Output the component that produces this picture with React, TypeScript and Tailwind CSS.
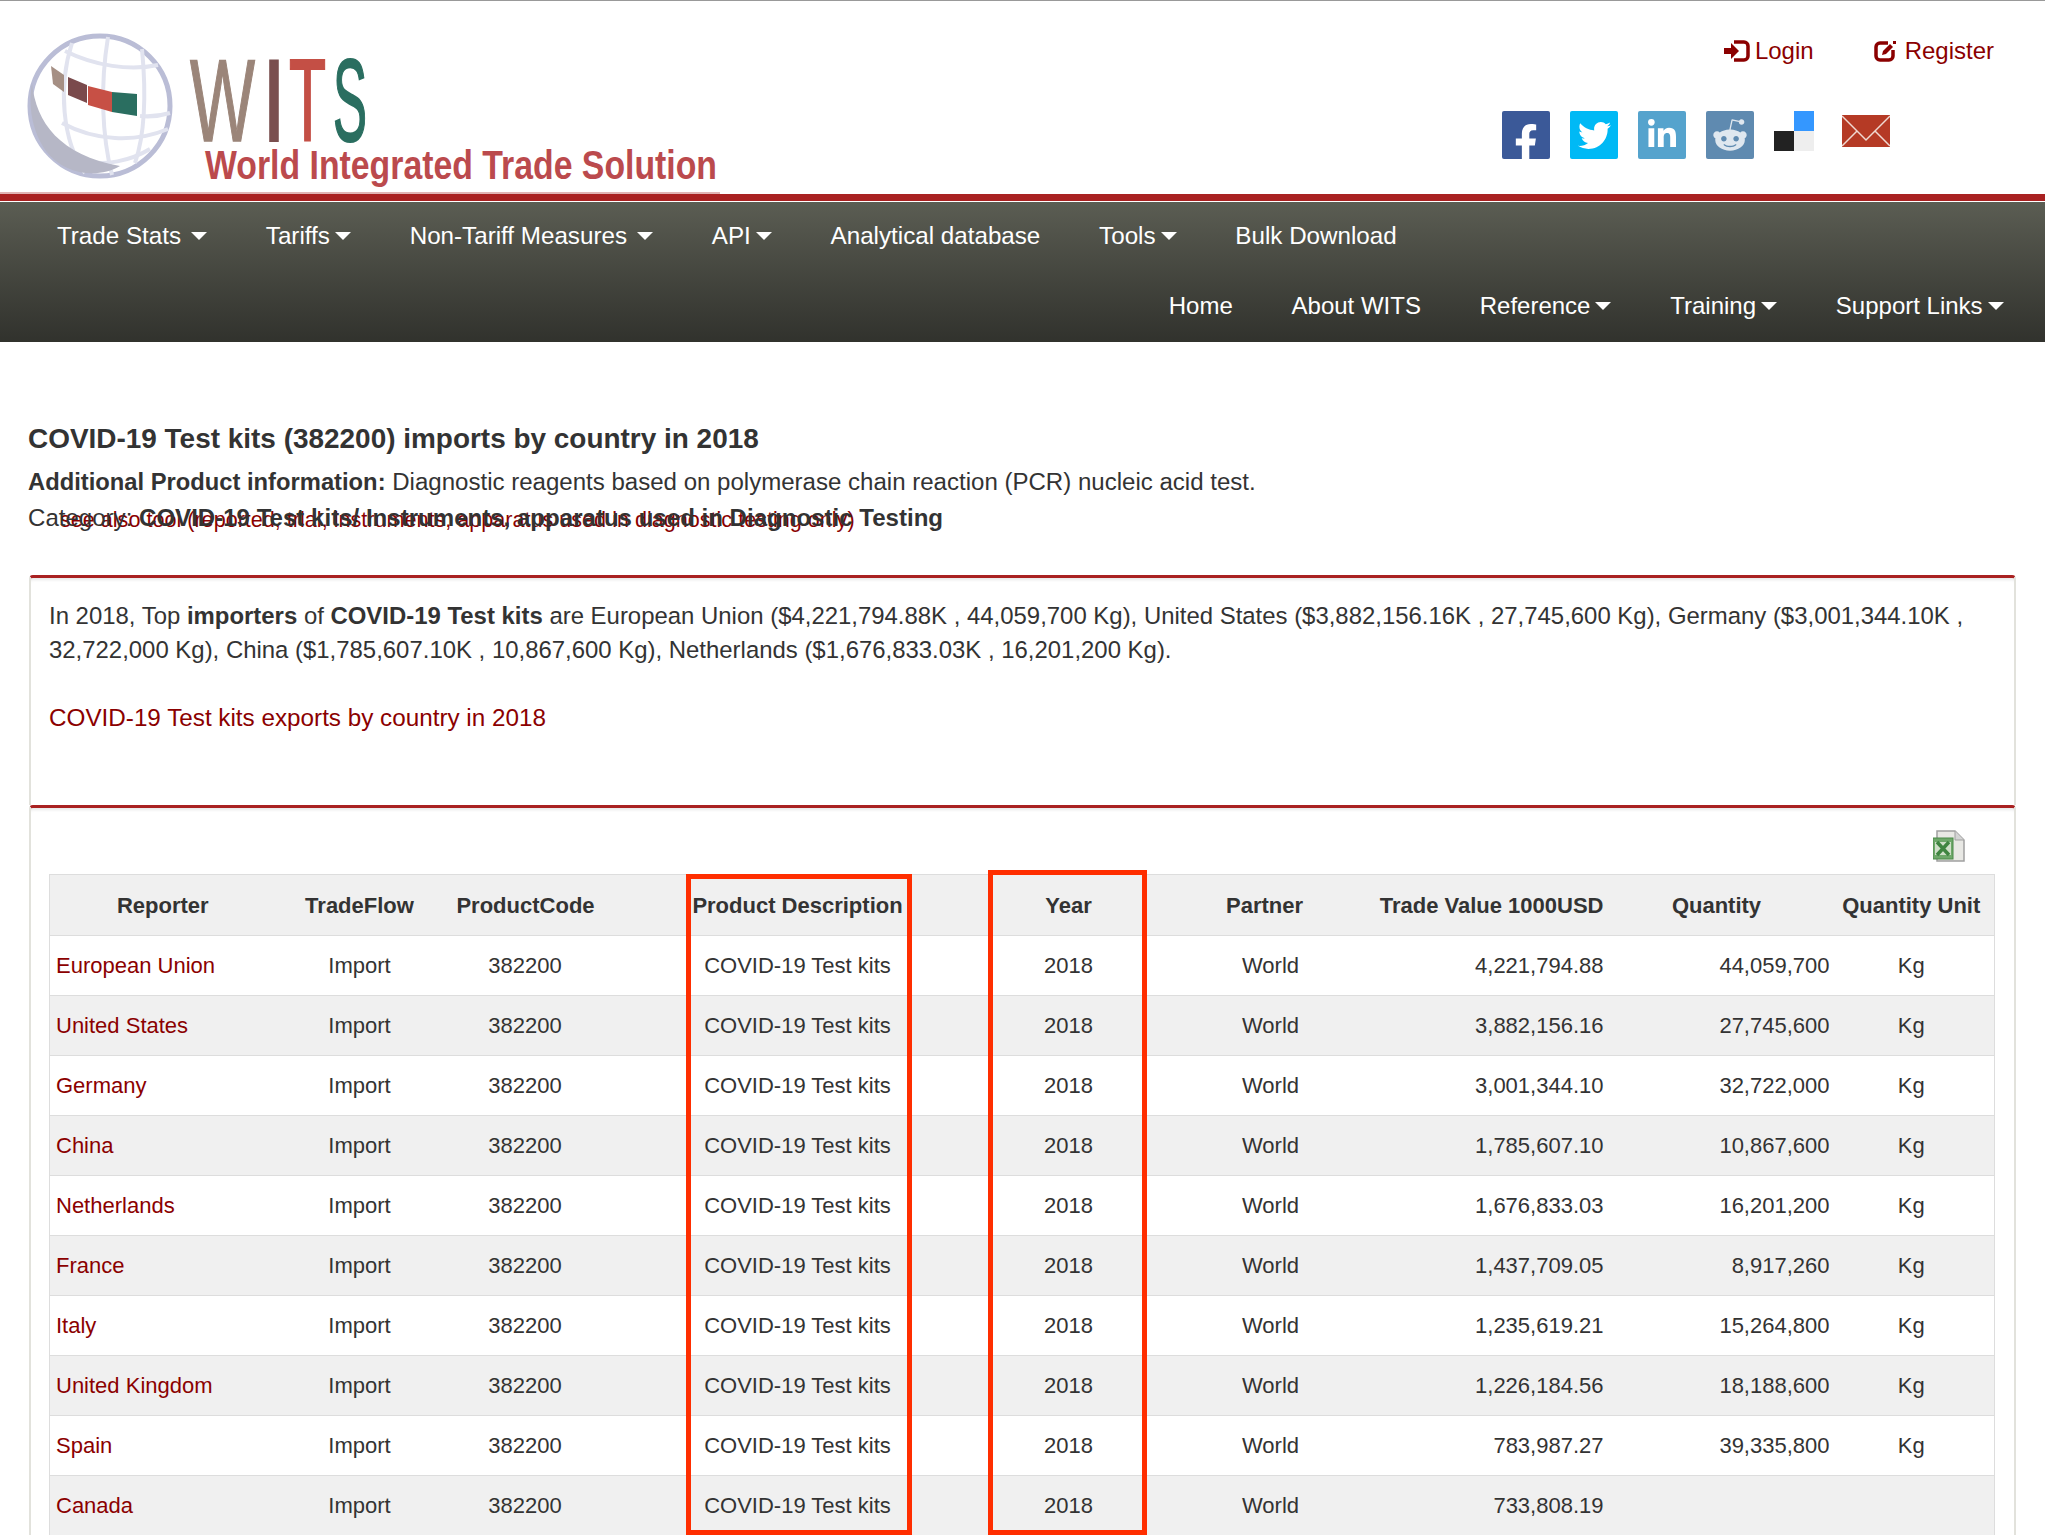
import { FaFacebookF, FaLinkedinIn, FaRedditAlien, FaTwitter } from "react-icons/fa";

const rows = [
  ["European Union", "4,221,794.88", "44,059,700", "Kg"],
  ["United States", "3,882,156.16", "27,745,600", "Kg"],
  ["Germany", "3,001,344.10", "32,722,000", "Kg"],
  ["China", "1,785,607.10", "10,867,600", "Kg"],
  ["Netherlands", "1,676,833.03", "16,201,200", "Kg"],
  ["France", "1,437,709.05", "8,917,260", "Kg"],
  ["Italy", "1,235,619.21", "15,264,800", "Kg"],
  ["United Kingdom", "1,226,184.56", "18,188,600", "Kg"],
  ["Spain", "783,987.27", "39,335,800", "Kg"],
  ["Canada", "733,808.19", "", ""],
];

const Caret = ({ wide }: { wide?: boolean }) => (
  <span
    className={`inline-block border-x-[8px] border-t-[8px] border-x-transparent border-t-white align-middle ${wide ? "ml-[10px]" : "ml-[5px]"}`}
  />
);

const NavItem = ({ label, caret, wide }: { label: string; caret?: boolean; wide?: boolean }) => (
  <a className="flex h-[70px] items-center px-[29.4px] pb-[2px] whitespace-nowrap text-white">
    {label}
    {caret && <Caret wide={wide} />}
  </a>
);

function Logo() {
  return (
    <svg width="730" height="193" viewBox="0 0 730 193" className="block shrink-0">
      <rect x="0" y="191" width="720" height="2" fill="#e0b4b4" />
      <circle cx="100" cy="105" r="70" fill="#fff" stroke="#babdd6" strokeWidth="5" />
      <g fill="none" stroke="#e1e3ef" strokeWidth="4">
        <path d="M72 42 C58 85 62 140 85 172" />
        <path d="M108 36 C100 85 102 135 112 174" />
        <path d="M142 48 C146 90 146 130 135 162" />
        <path d="M65 50 C95 65 130 70 158 64" />
        <path d="M140 115 C150 116 160 115 170 112" />
        <path d="M62 122 C95 140 135 142 168 128" />
        <path d="M85 160 C105 165 130 160 150 148" />
      </g>
      <path d="M32 82 C36 122 60 154 120 165 C98 178 64 174 46 150 C32 130 28 105 32 82 Z" fill="#b6b7c6" />
      <polygon points="51,65 64,74 64,91 53,83" fill="#a58f84" />
      <polygon points="68,76 87,84 87,102 68,94" fill="#7a4a4c" />
      <polygon points="88,85 112,91 112,111 88,104" fill="#c75045" />
      <polygon points="112,91 137,93 137,115 112,111" fill="#2a6e60" />
      <g fontFamily="'Liberation Sans', sans-serif">
        <text x="190" y="140" fontSize="116" fill="#9b8579" stroke="#9b8579" strokeWidth="1.5" textLength="65" lengthAdjust="spacingAndGlyphs">W</text>
        <text x="262" y="140" fontSize="116" fill="#7a4f4f" stroke="#7a4f4f" strokeWidth="2" textLength="24" lengthAdjust="spacingAndGlyphs">I</text>
        <text x="289" y="140" fontSize="116" fill="#c44f45" stroke="#c44f45" strokeWidth="2" textLength="37" lengthAdjust="spacingAndGlyphs">T</text>
        <text x="333" y="140" fontSize="116" fill="#2a6e60" stroke="#2a6e60" strokeWidth="2" textLength="34" lengthAdjust="spacingAndGlyphs">S</text>
        <text x="205" y="178" fontSize="41" fontWeight="700" fill="#bb4a4d" textLength="512" lengthAdjust="spacingAndGlyphs">
          World Integrated Trade Solution
        </text>
      </g>
    </svg>
  );
}

const LoginIcon = () => (
  <svg width="26" height="22" viewBox="0 0 26 22" className="shrink-0">
    <path d="M0 8h7V3l8 8-8 8v-5H0z" fill="#8b0000" />
    <path d="M10 2h10a4 4 0 0 1 4 4v10a4 4 0 0 1-4 4H10" fill="none" stroke="#8b0000" strokeWidth="3.5" />
  </svg>
);

const RegisterIcon = () => (
  <svg width="23" height="22" viewBox="0 0 23 22" className="shrink-0">
    <path d="M14 3H6a4 4 0 0 0-4 4v9a4 4 0 0 0 4 4h9a4 4 0 0 0 4-4v-6" fill="none" stroke="#8b0000" strokeWidth="3.5" />
    <path d="M8 15l1-4 7-7 3 3-7 7z" fill="#8b0000" />
    <rect x="19" y="1" width="3" height="3" fill="#8b0000" />
  </svg>
);

function Socials() {
  return (
    <div className="flex items-start gap-5">
      <span className="relative h-12 w-12 overflow-hidden rounded-[2px] bg-[#3b5998] text-white">
        <FaFacebookF className="absolute -bottom-[3px] right-[5px]" size={38} />
      </span>
      <span className="flex h-12 w-12 items-center justify-center rounded-[2px] bg-[#00b9f5] text-white">
        <FaTwitter size={33} />
      </span>
      <span className="flex h-12 w-12 items-center justify-center rounded-[2px] bg-[#55a3cd] text-white">
        <FaLinkedinIn size={32} />
      </span>
      <span className="flex h-12 w-12 items-center justify-center rounded-[2px] bg-[#5f8ab0] text-[#dfe7ef]">
        <FaRedditAlien size={36} />
      </span>
      <svg width="40" height="40" viewBox="0 0 40 40" className="block">
        <rect x="20" y="0" width="20" height="20" fill="#3497ff" />
        <rect x="0" y="20" width="20" height="20" fill="#222" />
        <rect x="20" y="20" width="20" height="20" fill="#eeeeee" />
      </svg>
      <svg width="48" height="32" viewBox="0 0 48 32" className="mt-1 ml-2 block">
        <rect width="48" height="32" fill="#b53a25" />
        <path d="M0 1l24 24L48 1M0 31l15-15M48 31L33 16" fill="none" stroke="#f0d9d2" strokeWidth="1.5" />
      </svg>
    </div>
  );
}

const ExcelIcon = () => (
  <svg width="32" height="32" viewBox="0 0 32 32" className="block">
    <path d="M4 1h18l9 9v21H4z" fill="#e8e8e4" stroke="#a0a0a0" strokeWidth="1.5" />
    <path d="M22 1v9h9" fill="#d4d4d4" stroke="#a0a0a0" />
    <rect x="0" y="8" width="20" height="21" fill="#6ea86a" stroke="#4a8a48" />
    <rect x="2" y="12" width="16" height="13" fill="#cfdfc8" />
    <path d="M4 12l12 13M16 12L4 25" stroke="#3f8540" strokeWidth="3.5" />
  </svg>
);

export default function App() {
  return (
    <div className="relative h-[1535px] overflow-hidden bg-white font-['Liberation_Sans',Arial,sans-serif] text-[22px] text-[#333]">
      <header className="flex h-[194px] justify-between border-t border-[#999]">
        <Logo />
        <div className="flex flex-col items-end pr-[51px] pt-[37px]">
          <div className="flex h-[26px] items-center text-[24px] text-[#8b0000]">
            <LoginIcon />
            <span className="ml-[5px]">Login</span>
            <span className="ml-[60px]">
              <RegisterIcon />
            </span>
            <span className="ml-[8px]">Register</span>
          </div>
          <div className="mt-[47px] mr-[104px]">
            <Socials />
          </div>
        </div>
      </header>
      <div className="h-[7px] bg-[#a92121]" />
      <nav className="mt-px h-[140px] bg-gradient-to-b from-[#5b5d53] to-[#31322d]">
        <div className="flex pl-[27.5px] text-[24.2px]">
          <NavItem label="Trade Stats" caret wide />
          <NavItem label="Tariffs" caret />
          <NavItem label="Non-Tariff Measures" caret wide />
          <NavItem label="API" caret />
          <NavItem label="Analytical database" />
          <NavItem label="Tools" caret />
          <NavItem label="Bulk Download" />
        </div>
        <div className="flex justify-end pr-[12px] text-[24px]">
          <NavItem label="Home" />
          <NavItem label="About WITS" />
          <NavItem label="Reference" caret />
          <NavItem label="Training" caret />
          <NavItem label="Support Links" caret />
        </div>
      </nav>
      <main className="px-[29px] pt-[79px]">
        <h1 className="-ml-px text-[27.95px] leading-[36px] font-bold">COVID-19 Test kits (382200) imports by country in 2018</h1>
        <p className="mt-[7px] -ml-px text-[24.05px] leading-[36px]">
          <b className="text-[23.75px]">Additional Product information:</b> Diagnostic reagents based on polymerase chain reaction (PCR) nucleic acid test.
        </p>
        <p className="relative -ml-px text-[24.07px] leading-[36px]">
          <span className="absolute left-[32px] top-[2px] whitespace-nowrap text-[21.6px] text-[#8b0000]">
            see also tool (reported, trial, instruments, apparatus used in diagnostic testing only)
          </span>
          <span className="relative">
            Category: <b>COVID-19 Test kits/ Instruments, apparatus used in Diagnostic Testing</b>
          </span>
        </p>
        <section className="mt-[39px] h-[230px] rounded-t-[4px] border-x-2 border-t-[3px] border-x-[#e2e2dc] border-t-[#a92121] px-[18px] pt-[21px] text-[23.93px] leading-[34px] shadow-[inset_0_4px_3px_-2px_#e8e8e8]">
          <p>
            In 2018, Top <b>importers</b> of <b>COVID-19 Test kits</b> are European Union ($4,221,794.88K , 44,059,700 Kg), United States ($3,882,156.16K , 27,745,600 Kg), Germany ($3,001,344.10K , 32,722,000 Kg), China ($1,785,607.10K , 10,867,600 Kg), Netherlands ($1,676,833.03K , 16,201,200 Kg).
          </p>
          <p className="mt-[34px] text-[24.25px] text-[#8b0000]">COVID-19 Test kits exports by country in 2018</p>
        </section>
        <section className="relative rounded-t-[4px] border-x-2 border-t-[3px] border-x-[#e2e2dc] border-t-[#a92121] px-[18px] pt-[22px] shadow-[inset_0_4px_3px_-2px_#e8e8e8]">
          <div className="flex h-[44px] justify-end pr-[31px]">
            <ExcelIcon />
          </div>
          <table className="w-[1945px] table-fixed border-collapse text-[22px]">
            <colgroup>
              <col className="w-[223px]" />
              <col className="w-[174px]" />
              <col className="w-[157px]" />
              <col className="w-[388px]" />
              <col className="w-[154px]" />
              <col className="w-[248px]" />
              <col className="w-[217px]" />
              <col className="w-[226px]" />
              <col className="w-[158px]" />
            </colgroup>
            <thead>
              <tr className="h-[61px] border border-[#ddd] bg-[#f0f0f0] text-center font-bold whitespace-nowrap">
                <th className="pl-[3px]">Reporter</th>
                <th>TradeFlow</th>
                <th className="pl-px">ProductCode</th>
                <th>Product Description</th>
                <th>Year</th>
                <th className="pr-[10px]">Partner</th>
                <th className="pr-[7px]">
                  <div className="flex justify-end">Trade Value 1000USD</div>
                </th>
                <th className="pr-[14px]">Quantity</th>
                <th className="pr-[8px]">Quantity Unit</th>
              </tr>
            </thead>
            <tbody>
              {rows.map((r, i) => (
                <tr key={r[0]} className={`h-[60px] border border-[#ddd] text-center ${i % 2 === 1 ? "bg-[#f0f0f0]" : "bg-white"}`}>
                  <td className="pl-[6px] text-left text-[#8b0000]">{r[0]}</td>
                  <td>Import</td>
                  <td>382200</td>
                  <td>COVID-19 Test kits</td>
                  <td>2018</td>
                  <td className="pl-[2px]">World</td>
                  <td className="pr-[7px] text-right">{r[1]}</td>
                  <td className="pr-[7px] text-right">{r[2]}</td>
                  <td className="pr-[8px]">{r[3]}</td>
                </tr>
              ))}
            </tbody>
          </table>
        </section>
      </main>
      {/* red highlight boxes from the annotated screenshot */}
      <div className="pointer-events-none absolute left-[686px] top-[874px] h-[661px] w-[226px] border-[5px] border-[#ff2e00]" />
      <div className="pointer-events-none absolute left-[988px] top-[870px] h-[665px] w-[159px] border-[5px] border-[#ff2e00]" />
    </div>
  );
}
